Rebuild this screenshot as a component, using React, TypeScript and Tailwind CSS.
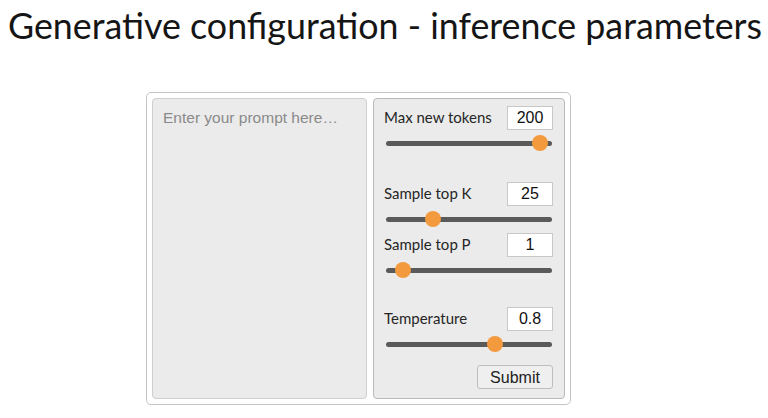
const params = [
  { label: "Max new tokens", value: "200", pos: 0.93, mt: "mt-0" },
  { label: "Sample top K", value: "25", pos: 0.285, mt: "mt-[31px]" },
  { label: "Sample top P", value: "1", pos: 0.105, mt: "mt-[6px]" },
  { label: "Temperature", value: "0.8", pos: 0.655, mt: "mt-[29px]" },
];

function Slider({ pos }: { pos: number }) {
  return (
    <div className="relative h-[16px] w-[166px] ml-[2px] flex items-center">
      <div className="h-[5px] w-full rounded-full bg-[#5a5a5a]" />
      <div
        className="absolute top-0 h-[16px] w-[16px] -ml-[8px] rounded-full bg-[#f39a3e]"
        style={{ left: `${pos * 100}%` }}
      />
    </div>
  );
}

export default function App() {
  return (
    <div className="w-[768px] h-[418px] bg-white overflow-hidden">
      <h1
        className="pl-[8px] pt-[4px] text-[35.8px] leading-[44px] text-[#151515]"
        style={{ fontFamily: "Lato, sans-serif" }}
      >
        Generative configuration - inference parameters
      </h1>

      <div className="ml-[146px] mt-[44px] w-[425px] h-[313px] border border-[#c4c4c4] rounded-[5px] bg-white p-[5px] flex gap-[6px]">
        <div className="w-[215px] h-full bg-[#ebebeb] border border-[#cfcfcf] rounded-[4px] px-[10px] pt-[6px]">
          <span
            className="text-[15.5px] text-[#8a8a8a]"
            style={{ fontFamily: "'Liberation Sans', Arial, sans-serif" }}
          >
            Enter your prompt here…
          </span>
        </div>

        <div className="flex-1 h-full bg-[#ebebeb] border border-[#b9b9b9] rounded-[4px] pl-[10px] pr-[10px] pt-[7px] flex flex-col">
          {params.map((p) => (
            <div key={p.label} className={p.mt}>
              <div className="flex items-center justify-between">
                <span
                  className="text-[15px] text-[#262626] -mt-[2px]"
                  style={{ fontFamily: "Lato, sans-serif" }}
                >
                  {p.label}
                </span>
                <div
                  className="w-[46px] h-[24px] bg-white border border-[#c8c8c8] flex items-center justify-center text-[16px] text-[#111] mr-[1px]"
                  style={{ fontFamily: "'Liberation Sans', Arial, sans-serif" }}
                >
                  {p.value}
                </div>
              </div>
              <div className="mt-[5px]">
                <Slider pos={p.pos} />
              </div>
            </div>
          ))}

          <div className="flex justify-end mt-[13px]">
            <button
              className="w-[76px] h-[24px] border border-[#bdbdbd] rounded-[3px] bg-[#efefef] text-[16px] text-[#222] mr-[1px]"
              style={{ fontFamily: "'Liberation Sans', Arial, sans-serif" }}
            >
              Submit
            </button>
          </div>
        </div>
      </div>
    </div>
  );
}
